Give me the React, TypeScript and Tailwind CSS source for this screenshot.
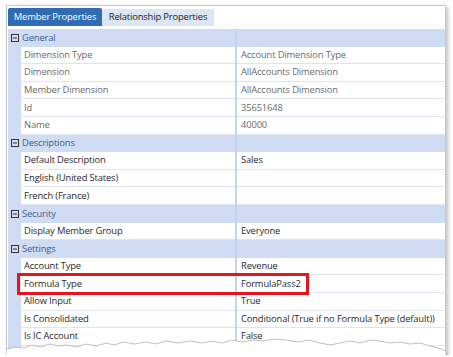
import React from "react";

type Row =
  | { kind: "header"; label: string }
  | { kind: "item"; label: string; value: string; dim?: boolean };

const rows: Row[] = [
  { kind: "header", label: "General" },
  { kind: "item", label: "Dimension Type", value: "Account Dimension Type", dim: true },
  { kind: "item", label: "Dimension", value: "AllAccounts Dimension", dim: true },
  { kind: "item", label: "Member Dimension", value: "AllAccounts Dimension", dim: true },
  { kind: "item", label: "Id", value: "35651648", dim: true },
  { kind: "item", label: "Name", value: "40000", dim: true },
  { kind: "header", label: "Descriptions" },
  { kind: "item", label: "Default Description", value: "Sales" },
  { kind: "item", label: "English (United States)", value: "" },
  { kind: "item", label: "French (France)", value: "" },
  { kind: "header", label: "Security" },
  { kind: "item", label: "Display Member Group", value: "Everyone" },
  { kind: "header", label: "Settings" },
  { kind: "item", label: "Account Type", value: "Revenue" },
  { kind: "item", label: "Formula Type", value: "FormulaPass2" },
  { kind: "item", label: "Allow Input", value: "True" },
  { kind: "item", label: "Is Consolidated", value: "Conditional (True if no Formula Type (default))" },
  { kind: "item", label: "Is IC Account", value: "False" },
  { kind: "item", label: "", value: "" },
];

function Minus() {
  return (
    <svg width="8" height="8" viewBox="0 0 8 8" className="block">
      <rect x="0.5" y="0.5" width="7" height="7" fill="none" stroke="#333" strokeWidth="1" />
      <line x1="2" y1="4" x2="6" y2="4" stroke="#333" strokeWidth="1" />
    </svg>
  );
}

const tear =
  "M0,47 L10,45 L18,46 L26,43 L34,45 L44,42 L52,44 L60,43 L70,45 L80,42 L90,44 L100,41 L108,43 L118,40 L128,42 L140,40 L150,42 L160,39 L172,41 L184,39 L196,41 L206,39 L216,41 L226,38 L236,40 L248,38 L258,39 L268,37 L280,38 L292,40 L302,38 L314,41 L324,43 L334,41 L344,39 L354,41 L364,38 L374,39 L384,41 L394,40 L404,42 L414,41 L424,44 L432,46 L440,49 L440,60 L0,60 Z";

export default function App() {
  return (
    <div
      className="relative w-[453px] h-[357px] bg-white overflow-hidden tracking-[-0.15px]"
      style={{ fontFamily: '"Open Sans", "Noto Sans", sans-serif' }}
    >
      <div className="ml-[6px] mt-[5px] w-[440px] h-[360px] bg-white border border-[#c9c9c9] shadow-[2px_2px_4px_rgba(0,0,0,0.25)] pl-px pt-[2px] relative">
        <div className="flex items-end h-[18px]">
          <div className="shrink-0 h-[18px] w-[94px] bg-[#2f6cb3] rounded-t-[2px] text-white text-[9.4px] flex items-center justify-center whitespace-nowrap">
            Member Properties
          </div>
          <div className="shrink-0 h-[17px] w-[112px] bg-[#dbe6f6] text-[#222] text-[9.4px] flex items-center justify-center whitespace-nowrap">
            Relationship Properties
          </div>
        </div>
        <div className="mt-[3px] w-[437px]">
          {rows.map((r, i) =>
            r.kind === "header" ? (
              <div key={i} className="flex h-[17.6px] bg-[#cfdcf3]">
                <div className="shrink-0 w-[13px] flex items-center justify-center pl-px">
                  <Minus />
                </div>
                <div className="shrink-0 w-[214px] flex items-center pl-[1px] text-[9.4px] text-[#3d5f91] whitespace-nowrap">
                  {r.label}
                </div>
                <div className="shrink-0 w-[2px] bg-[#c3d3ee]" />
                <div className="flex-1 min-w-0" />
              </div>
            ) : (
              <div key={i} className="flex h-[17.6px]">
                <div className="shrink-0 w-[13px] bg-[#cfdcf3]" />
                <div
                  className={`shrink-0 w-[214px] flex items-center pl-[3px] text-[9.4px] border-b border-[#dee5ef] whitespace-nowrap ${
                    r.dim ? "text-[#6b6b6b]" : "text-[#2a2a2a]"
                  }`}
                >
                  {r.label}
                </div>
                <div className="shrink-0 w-[2px] bg-[#c3d3ee]" />
                <div
                  className={`flex-1 min-w-0 flex items-center pl-[4px] text-[9.4px] border-b border-[#dee5ef] whitespace-nowrap ${
                    r.dim ? "text-[#6b6b6b]" : "text-[#2a2a2a]"
                  }`}
                >
                  {r.value}
                </div>
              </div>
            )
          )}
        </div>
      </div>

      <div className="absolute left-[17px] top-[273px] w-[292px] h-[22px] border-[3px] border-[#e4161b]" />

      <svg className="absolute left-[6px] top-[302px]" width="447" height="57" viewBox="0 0 447 57">
        <defs>
          <filter id="b" x="-5%" y="-50%" width="110%" height="200%">
            <feGaussianBlur stdDeviation="1.5" />
          </filter>
        </defs>
        <path d={tear} transform="translate(1,3)" fill="#8a8a8a" filter="url(#b)" />
        <path d={tear} fill="white" stroke="#b0b0b0" strokeWidth="0.8" />
        <rect x="0" y="53" width="447" height="10" fill="white" />
      </svg>
    </div>
  );
}
